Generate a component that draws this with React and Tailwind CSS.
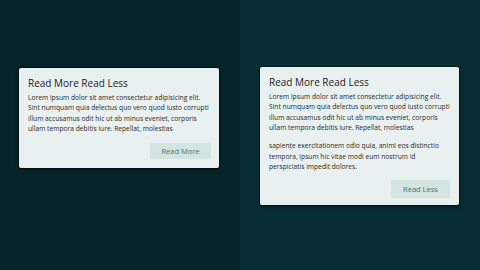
const P1 = [
  "Lorem ipsum dolor sit amet consectetur adipisicing elit.",
  "Sint numquam quia delectus quo vero quod iusto corrupti",
  "illum accusamus odit hic ut ab minus eveniet, corporis",
  "ullam tempora debitis iure. Repellat, molestias",
];
const P2 = [
  "sapiente exercitationem odio quia, animi eos distinctio",
  "tempora, ipsum hic vitae modi eum nostrum id",
  "perspiciatis impedit dolores.",
];

function Para({ lines, className }) {
  return (
    <p className={"text-[6.7px] leading-[10.4px] text-[#2b2b2b] whitespace-nowrap " + className}>
      {lines.map((l, i) => (
        <span key={i} className="block">{l}</span>
      ))}
    </p>
  );
}

export default function App() {
  return (
    <div className="flex w-[480px] h-[270px] overflow-hidden font-['Open_Sans',sans-serif]">
      <div className="w-[240px] h-full bg-[#06252a] pt-[68px] pl-[19px]">
        <div className="w-[200px] rounded-[2px] bg-[#e8f0f0] shadow-[0_0_0_1px_rgba(0,0,0,0.35),0_2px_4px_rgba(0,0,0,0.4)] pt-[9px] pb-[9px] px-[9px]">
          <h2 className="text-[10px] leading-[12px] text-[#1b1b1b] font-medium">Read More Read Less</h2>
          <Para lines={P1} className="mt-[4px]" />
          <div className="flex justify-end mt-[8px] -mr-[1px]">
            <button className="w-[61px] h-[16px] bg-[#d3e4e1] text-[#3b7b77] text-[7.5px] leading-[16px] rounded-[1px]">Read More</button>
          </div>
        </div>
      </div>
      <div className="w-[240px] h-full bg-[#082e35] pt-[67px] pl-[20px]">
        <div className="w-[199px] rounded-[2px] bg-[#e8f0f0] shadow-[0_0_0_1px_rgba(0,0,0,0.35),0_2px_4px_rgba(0,0,0,0.4)] pt-[9px] pb-[7px] px-[9px]">
          <h2 className="text-[10px] leading-[12px] text-[#1b1b1b] font-medium">Read More Read Less</h2>
          <Para lines={P1} className="mt-[4px]" />
          <Para lines={P2} className="mt-[7.6px]" />
          <div className="flex justify-end mt-[8px]">
            <button className="w-[59px] h-[18px] bg-[#d3e4e1] text-[#3b7b77] text-[7.5px] leading-[18px] rounded-[1px]">Read Less</button>
          </div>
        </div>
      </div>
    </div>
  );
}
